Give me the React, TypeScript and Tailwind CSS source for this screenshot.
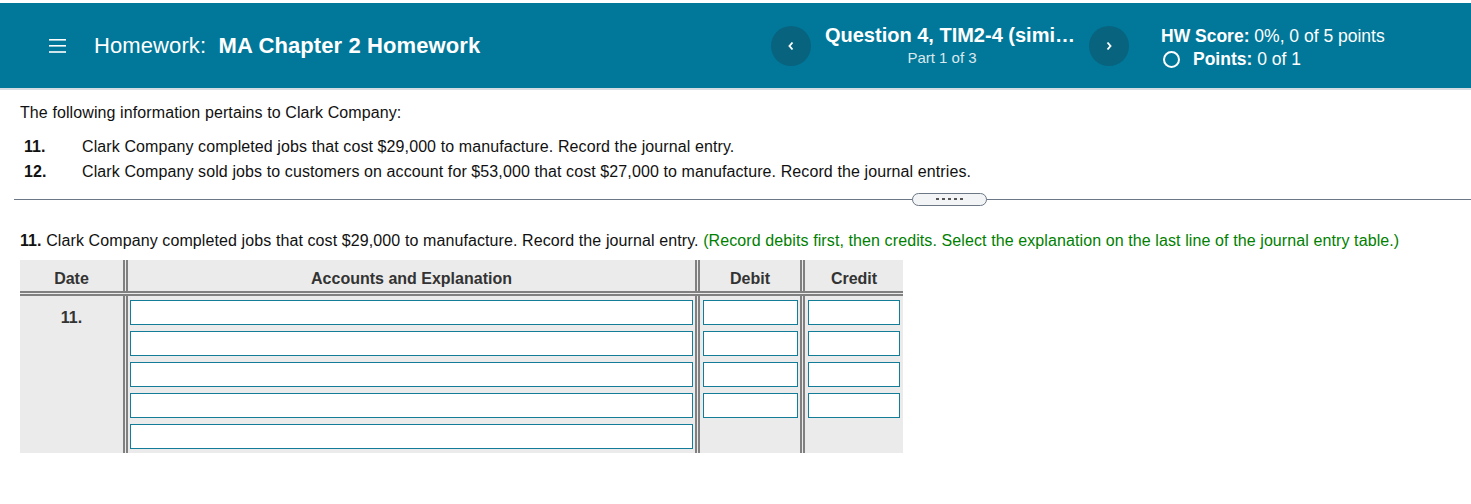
import React from "react";

function Hamburger() {
  return (
    <svg width="18" height="14" viewBox="0 0 18 14" className="block">
      <rect x="0" y="0" width="17" height="1.6" fill="white" />
      <rect x="0" y="6" width="17" height="1.6" fill="white" />
      <rect x="0" y="12.2" width="17" height="1.6" fill="white" />
    </svg>
  );
}

function NavBtn({ dir }: { dir: "l" | "r" }) {
  return (
    <div className="flex h-[40px] w-[40px] flex-none items-center justify-center rounded-full bg-[#08637f]">
      <svg width="8" height="10" viewBox="0 0 8 10">
        {dir === "l" ? (
          <path d="M5.5 1.5 L2.5 5 L5.5 8.5" stroke="white" strokeWidth="1.9" fill="none" />
        ) : (
          <path d="M2.5 1.5 L5.5 5 L2.5 8.5" stroke="white" strokeWidth="1.9" fill="none" />
        )}
      </svg>
    </div>
  );
}

function Field({ w }: { w: string }) {
  return <div className={`h-[25px] ${w} border border-[#137c99] bg-white`} />;
}

export default function App() {
  const font = { fontFamily: '"Liberation Sans", Arial, sans-serif' };
  return (
    <div className="min-h-[504px] w-[1471px] bg-white text-[#111]" style={font}>
      <div className="h-[3px] bg-white" />
      <header className="flex h-[85px] items-center bg-[#017899] text-white">
        <div className="flex w-[771px] flex-none items-center pl-[49px]">
          <Hamburger />
          <div className="ml-[27px] text-[22px] leading-[26px] tracking-[0.1px]">
            Homework:&nbsp; <span className="font-bold">MA Chapter 2 Homework</span>
          </div>
        </div>
        <NavBtn dir="l" />
        <div className="flex w-[278px] flex-none flex-col items-center">
          <div className="text-[20px] font-bold leading-[22px]">Question 4, TIM2-4 (simi…</div>
          <div className="mt-[3px] pr-[16px] text-[15px] leading-[18px] text-[#dbe9ee]">Part 1 of 3</div>
        </div>
        <NavBtn dir="r" />
        <div className="ml-[32px] flex flex-col pt-[4px] text-[17.5px]">
          <div className="leading-[21px]">
            <span className="font-bold">HW Score:</span> 0%, 0 of 5 points
          </div>
          <div className="mt-[2px] flex items-center leading-[21px]">
            <span className="ml-[2px] mr-[13px] inline-block h-[17px] w-[17px] rounded-full border-[2px] border-white" />
            <span className="font-bold">Points:</span>&nbsp;0 of 1
          </div>
        </div>
      </header>
      <div className="h-[1.5px] bg-[#d5dde3]" />

      <div className="pl-[20px] pt-[13px] text-[16px] leading-[20px] tracking-[0.1px]">
        <div>The following information pertains to Clark Company:</div>
        <div className="mt-[14px] flex flex-col gap-[5px]">
          <div className="flex">
            <span className="w-[62px] pl-[4px] font-bold">11.</span>
            <span>Clark Company completed jobs that cost $29,000 to manufacture. Record the journal entry.</span>
          </div>
          <div className="flex">
            <span className="w-[62px] pl-[4px] font-bold">12.</span>
            <span>Clark Company sold jobs to customers on account for $53,000 that cost $27,000 to manufacture. Record the journal entries.</span>
          </div>
        </div>
      </div>

      <div className="relative mt-[17px] ml-[14px] h-[1.5px] bg-[#6b7785]">
        <div className="absolute left-[898px] top-[-6px] flex h-[13px] w-[75px] items-center justify-center gap-[3px] rounded-full border-[1.5px] border-[#6b7785] bg-[#f2f4f6]">
          <span className="h-[2px] w-[3px] bg-[#555]" />
          <span className="h-[2px] w-[3px] bg-[#555]" />
          <span className="h-[2px] w-[3px] bg-[#555]" />
          <span className="h-[2px] w-[3px] bg-[#555]" />
          <span className="h-[2px] w-[3px] bg-[#555]" />
        </div>
      </div>

      <div className="pl-[20px] pt-[31px] text-[16px] leading-[20px] tracking-[0.1px]">
        <span className="font-bold">11.</span> Clark Company completed jobs that cost $29,000 to manufacture. Record the journal entry.{" "}
        <span className="text-[#008000]">(Record debits first, then credits. Select the explanation on the last line of the journal entry table.)</span>
      </div>

      <div className="ml-[20px] mt-[9px] w-[883px] bg-[#ebebeb] text-[16px] text-[#333]">
        <div className="flex h-[36px] border-b-[5px] border-double border-[#808080] font-bold">
          <div className="flex w-[108px] items-center justify-center border-r-[5px] border-double border-[#808080] pt-[6px]">Date</div>
          <div className="flex w-[572px] items-center justify-center border-r-[5px] border-double border-[#808080] pt-[7px]">Accounts and Explanation</div>
          <div className="flex w-[105px] items-center justify-center border-r-[5px] border-double border-[#808080] pt-[7px]">Debit</div>
          <div className="flex flex-1 items-center justify-center pt-[7px]">Credit</div>
        </div>
        <div className="flex h-[157px]">
          <div className="w-[108px] border-r-[5px] border-double border-[#808080] pt-[10px] text-center font-bold">11.</div>
          <div className="flex w-[572px] flex-col gap-[6px] border-r-[5px] border-double border-[#808080] pl-[2px] pt-[4px]">
            <Field w="w-[563px]" />
            <Field w="w-[563px]" />
            <Field w="w-[563px]" />
            <Field w="w-[563px]" />
            <Field w="w-[563px]" />
          </div>
          <div className="flex w-[105px] flex-col gap-[6px] border-r-[5px] border-double border-[#808080] pl-[3px] pt-[4px]">
            <Field w="w-[95px]" />
            <Field w="w-[95px]" />
            <Field w="w-[95px]" />
            <Field w="w-[95px]" />
          </div>
          <div className="flex flex-1 flex-col gap-[6px] pl-[3px] pt-[4px]">
            <Field w="w-[92px]" />
            <Field w="w-[92px]" />
            <Field w="w-[92px]" />
            <Field w="w-[92px]" />
          </div>
        </div>
      </div>
    </div>
  );
}
